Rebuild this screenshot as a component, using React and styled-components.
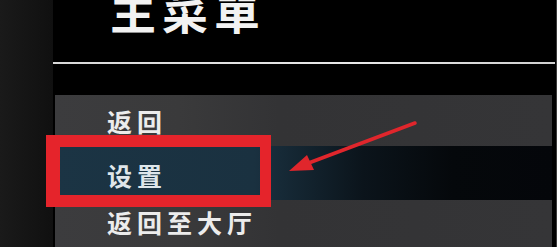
import styled, { createGlobalStyle } from 'styled-components';

const GlobalStyle = createGlobalStyle`
  html, body {
    margin: 0;
    padding: 0;
    background: #000;
  }
  body {
    font-family: "Noto Sans CJK SC", "Noto Sans", sans-serif;
  }
`;

const Screen = styled.div`
  position: relative;
  display: flex;
  width: 557px;
  height: 247px;
  overflow: hidden;
  background: #000;
  box-shadow: inset 1px 0 0 #3a3a3a, inset -1px 0 0 #3a3a3a;
`;

const SideStrip = styled.div`
  width: 53px;
  flex: none;
  background: linear-gradient(to right, #1a1a1a, #101010);
`;

const Panel = styled.div`
  flex: 1;
  display: flex;
  flex-direction: column;
  padding-right: 5px;
`;

const Title = styled.h1`
  margin: -14px 0 0 57px;
  height: 76px;
  flex: none;
  font-size: 46px;
  line-height: 46px;
  font-weight: 700;
  letter-spacing: 6px;
  color: #f2f2f2;
  font-family: "Noto Sans CJK TC", "Noto Sans CJK SC", sans-serif;
`;

const Rule = styled.div`
  height: 2px;
  margin: 0 -3px 0 0;
  background: linear-gradient(to right, #d8d8d8, #e8e8e8 60%, #cfcfcf);
  flex: none;
`;

const Menu = styled.div`
  display: flex;
  flex-direction: column;
  margin-top: 31px;
  margin-left: 2px;
`;

const Row = styled.div`
  position: relative;
  display: flex;
  align-items: center;
  flex: none;
  height: ${p => p.$h}px;
  padding-left: 52px;
  background: ${p =>
    p.$active
      ? 'linear-gradient(to right, #1b3444 0%, #1a3140 40%, #0b141b 62%, #05080b 80%, #04060a 100%)'
      : 'linear-gradient(to right, #3c3c3e 0%, #3a3a3b 25%, #333335 45%, #353537 100%)'};
`;

const Label = styled.span`
  font-size: 25px;
  font-weight: 700;
  letter-spacing: 5px;
  color: ${p => (p.$active ? '#dfe6ea' : '#ececec')};
  margin-top: ${p => p.$shift || 0}px;
`;

const Highlight = styled.div`
  position: absolute;
  left: 46px;
  top: 135px;
  width: 225px;
  height: 72px;
  box-sizing: border-box;
  border: 12px solid #e5242b;
  border-left-width: 14px;
  border-right-width: 11px;
  pointer-events: none;
`;

const Overlay = styled.svg`
  position: absolute;
  left: 0;
  top: 0;
  pointer-events: none;
`;

const menuItems = [
  { label: '返回', h: 51 },
  { label: '设置', h: 54, active: true, shift: 4 },
  { label: '返回至大厅', h: 50, shift: -6 },
];

export default function App() {
  return (
    <>
      <GlobalStyle />
      <Screen>
        <SideStrip />
        <Panel>
          <Title>主菜單</Title>
          <Rule />
          <Menu>
            {menuItems.map(item => (
              <Row key={item.label} $h={item.h} $active={item.active}>
                <Label $active={item.active} $shift={item.shift}>
                  {item.label}
                </Label>
              </Row>
            ))}
          </Menu>
        </Panel>
        <Highlight />
        <Overlay width="557" height="247" viewBox="0 0 557 247">
          <line x1="415" y1="123" x2="306" y2="164" stroke="#e0262c" strokeWidth="3.5" strokeLinecap="round" />
          <polygon points="289,171 314,170 307,155" fill="#e0262c" />
        </Overlay>
      </Screen>
    </>
  );
}
